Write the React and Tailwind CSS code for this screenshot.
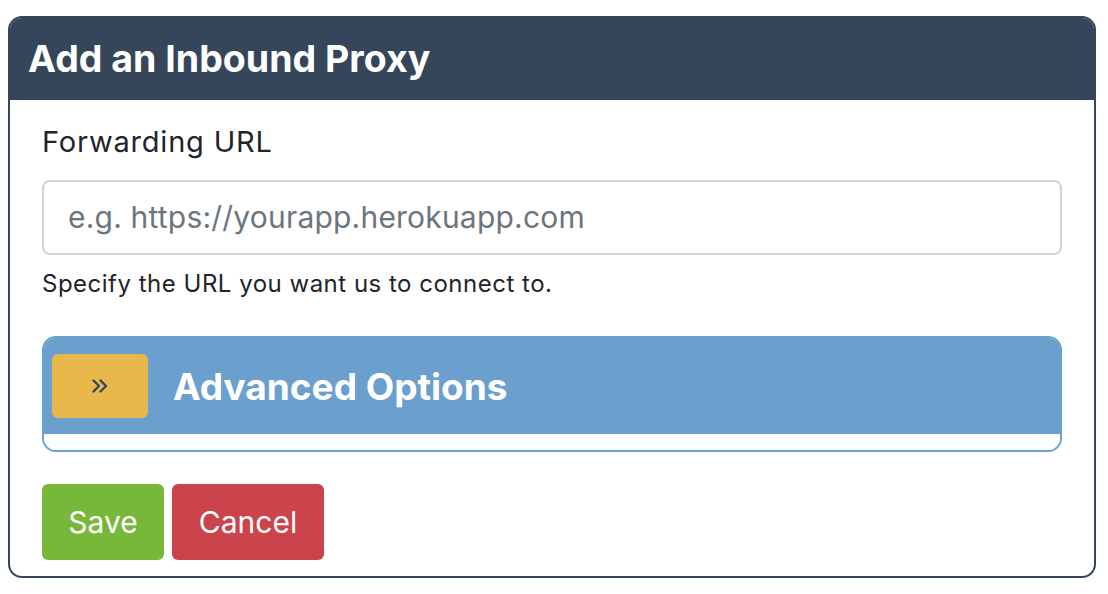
import React from "react";

const App = () => (
  <div className="w-[1108px] h-[594px] bg-white pt-4 pl-2 font-['Inter',sans-serif]">
    <div className="w-[1088px] border-2 border-[#36465a] rounded-[14px] overflow-hidden">
      <div className="bg-[#36465a] h-[82px] flex items-center px-[18px]">
        <h1 className="text-white text-[37.5px] font-bold leading-none">Add an Inbound Proxy</h1>
      </div>
      <div className="px-8 pt-[22px] pb-[16px]">
        <label className="block text-[#212529] text-[29px] tracking-[0.8px] leading-[40px]">Forwarding URL</label>
        <div className="mt-[18px] h-[75px] border-2 border-[#ced4da] rounded-lg flex items-center px-6">
          <span className="text-[#6c757d] text-[30px] tracking-[0.2px]">e.g. https://yourapp.herokuapp.com</span>
        </div>
        <p className="mt-[14px] text-[#212529] text-[24px] tracking-[0.5px] leading-[30px]">Specify the URL you want us to connect to.</p>
        <div className="mt-[37px] border-2 border-[#6b9fcd] rounded-[14px] overflow-hidden">
          <div className="bg-[#6b9fcd] h-[96px] flex items-center pl-2 gap-[25px]">
            <div className="w-[96px] h-[64px] bg-[#e8b84a] rounded-md flex items-center justify-center">
              <svg width="18" height="16" viewBox="0 0 18 16" fill="none" stroke="#36465a" strokeWidth="2.4" strokeLinecap="round" strokeLinejoin="round">
                <path d="M2.5 2.5l5.5 5.5-5.5 5.5" />
                <path d="M9.5 2.5l5.5 5.5-5.5 5.5" />
              </svg>
            </div>
            <h2 className="text-white text-[37px] font-bold leading-none">Advanced Options</h2>
          </div>
          <div className="h-[16px] bg-white" />
        </div>
        <div className="mt-[32px] flex gap-2">
          <button className="w-[122px] h-[76px] bg-[#77b83a] text-white text-[30px] rounded-md">Save</button>
          <button className="w-[152px] h-[76px] bg-[#cc444b] text-white text-[30px] rounded-md">Cancel</button>
        </div>
      </div>
    </div>
  </div>
);

export default App;
